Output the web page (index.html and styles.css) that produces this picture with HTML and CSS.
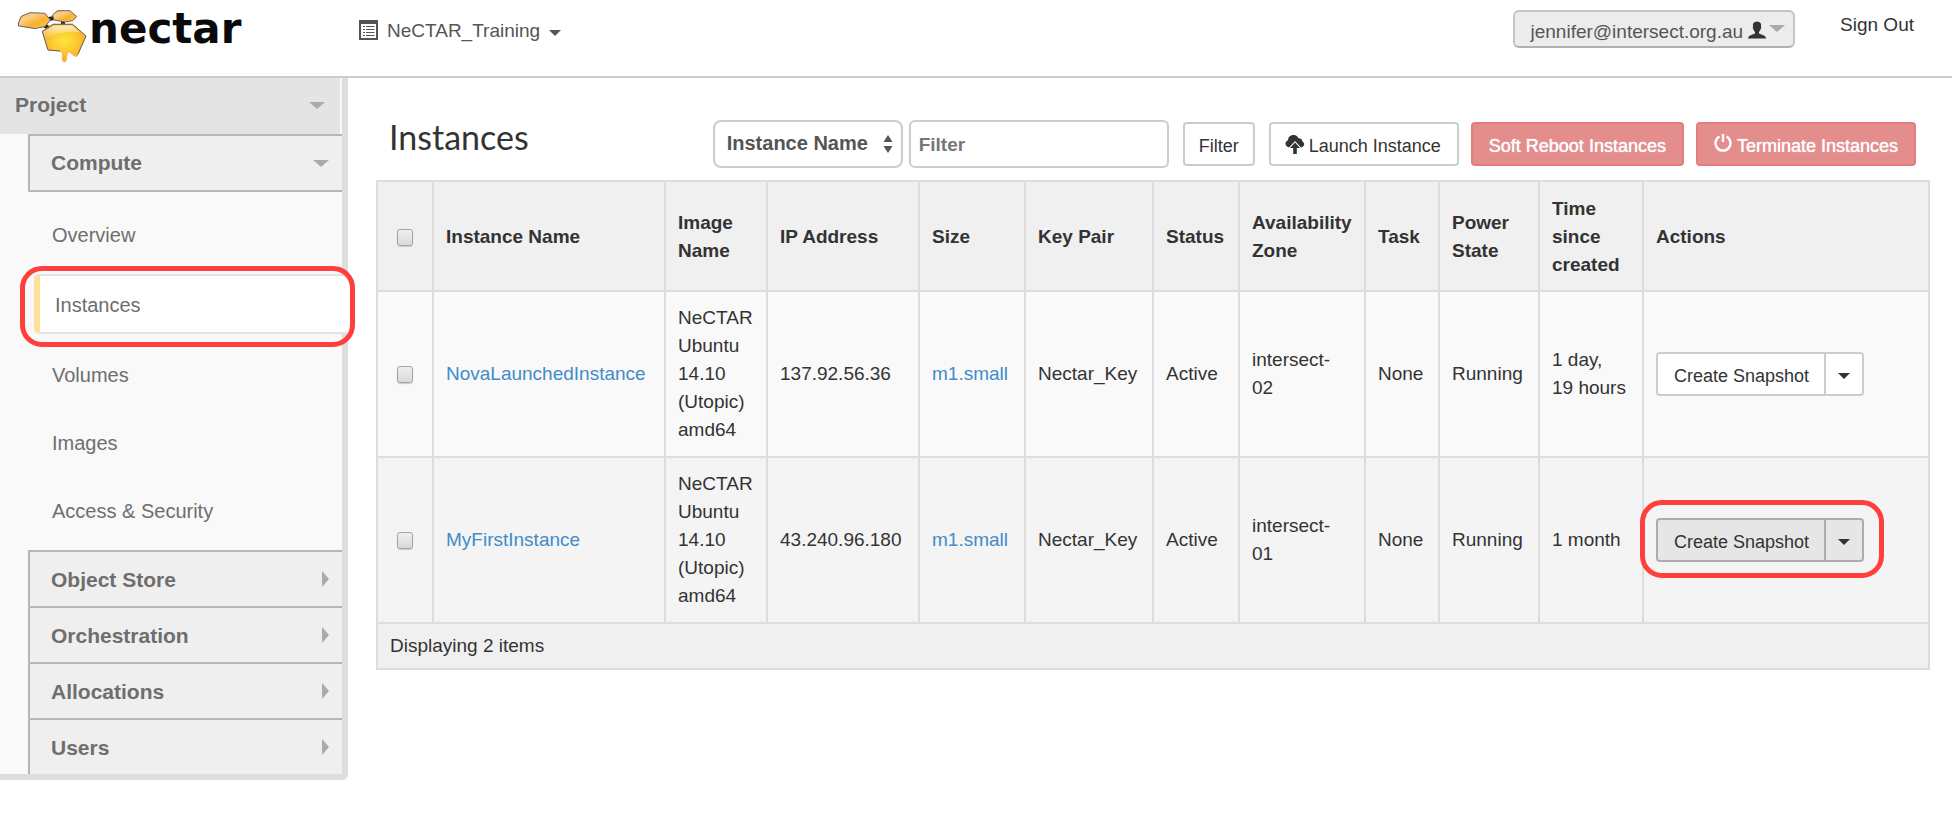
FILE: index.html
```html
<!DOCTYPE html>
<html lang="en">
<head>
<meta charset="utf-8">
<title>Instances - NeCTAR Dashboard</title>
<link rel="stylesheet" href="styles.css">
</head>
<body>
<header class="topbar">
  <a class="brand" href="#">
    <svg class="brand-mark" viewBox="0 0 70 54" aria-hidden="true">
      <defs>
        <linearGradient id="petal" x1="0" y1="0" x2="1" y2="1">
          <stop offset="0" stop-color="#f9a83a"/><stop offset=".3" stop-color="#fcd08a"/><stop offset=".6" stop-color="#f9b02f"/><stop offset="1" stop-color="#fbd43a"/>
        </linearGradient>
        <radialGradient id="body" cx=".5" cy=".45" r=".6">
          <stop offset="0" stop-color="#fbe63a"/><stop offset=".5" stop-color="#fcc92f"/><stop offset="1" stop-color="#f8a02c"/>
        </radialGradient>
        <linearGradient id="shine" x1="0" y1="0" x2="0" y2="1">
          <stop offset="0" stop-color="#fff" stop-opacity=".7"/><stop offset="1" stop-color="#fff" stop-opacity="0"/>
        </linearGradient>
      </defs>
      <path d="M26 15l6 4M31 9l5-1M45 11v5" stroke="#222" stroke-width="4"/>
      <path d="M.5 16V13L3 6.500l9-3.800 15 .6 5.500 6.700-5.500 6.500-10 2z" fill="url(#petal)" stroke="#666"/>
      <path d="M34.500 5l5-4.300H52l6.500 5.800-3.500 4-8 1.500-11-2z" fill="url(#petal)" stroke="#666"/>
      <path d="M24.300 21.500L35 14.300h19.500L68 26l-9 20.500-4-1.500-4-3.500-2 2.500-1 7-2 .7-1.700-1.700.3-6.500L42 41l-12-1z" fill="url(#body)" stroke="#f9ab4c"/>
      <path d="M42 41l-12-1-5.700-18.500L35 14.300h19.500L68 26l-8 18" fill="none" stroke="#666"/>
      <path d="M25.500 22L36 15.500h18l8 7q-18-3-35 6z" fill="url(#shine)"/>
    </svg>
    <span class="brand-name">nectar</span>
  </a>
  <button class="project-switch" type="button">
    <svg class="icon-list" viewBox="0 0 19 20" aria-hidden="true">
      <path d="M1 1h17v18H1z" fill="none" stroke="#555" stroke-width="2"/>
      <path d="M1 2.500h17" stroke="#555" stroke-width="3"/>
      <path d="M4 6.500h2M4 9.500h2M4 12.500h2M4 15.500h2M7 6.500h8.500M7 9.500h8.500M7 12.500h8.500M7 15.500h8.500" stroke="#555"/>
    </svg>
    <span>NeCTAR_Training</span>
    <span class="caret"></span>
  </button>
  <button class="user-menu" type="button">
    <span>jennifer@intersect.org.au</span>
    <svg class="icon-user" viewBox="0 0 18 18" aria-hidden="true">
      <path d="M5.500 2Q6.500.5 9 .5t3.500 1.500q1 1.500.5 4 .6.500-.3 2.200Q12 10 11 11v1.500l5 2q2 .8 2 3H0q0-2.200 2-3l5-2V11Q6 10 5.300 8.200 4.400 6.500 5 6q-.5-2.500.5-4z" fill="#333"/>
    </svg>
    <span class="arrow-down"></span>
  </button>
  <a class="sign-out" href="#">Sign Out</a>
</header>

<div class="layout">
  <nav class="sidebar">
    <button class="nav-project" type="button">Project<span class="arrow-down"></span></button>
    <div class="nav-groups">
      <button class="nav-group nav-group-open" type="button">Compute<span class="arrow-down"></span></button>
      <ul class="nav-items">
        <li><a href="#">Overview</a></li>
        <li class="active"><a href="#">Instances</a><span class="ring"></span></li>
        <li><a href="#">Volumes</a></li>
        <li><a href="#">Images</a></li>
        <li><a href="#">Access &amp; Security</a></li>
      </ul>
      <button class="nav-group" type="button">Object Store<span class="arrow-right"></span></button>
      <button class="nav-group" type="button">Orchestration<span class="arrow-right"></span></button>
      <button class="nav-group" type="button">Allocations<span class="arrow-right"></span></button>
      <button class="nav-group" type="button">Users<span class="arrow-right"></span></button>
    </div>
  </nav>

  <main class="content">
    <div class="heading">
      <h1>Instances</h1>
      <form class="tools">
        <span class="select-box">
          <select aria-label="Filter by"><option>Instance Name</option></select>
          <svg class="icon-updown" viewBox="0 0 10 20" aria-hidden="true"><path d="M5 1l4.500 7h-9zM5 19l4.500-7h-9z" fill="#555"/></svg>
        </span>
        <input class="filter-text" type="text" placeholder="Filter" aria-label="Filter">
        <button class="btn btn-filter" type="button">Filter</button>
        <button class="btn btn-launch" type="button">
          <svg class="icon-cloud" viewBox="0 0 20 20" aria-hidden="true">
            <path d="M2 11.500A3.500 3.500 0 0 1 3 5.300 5.500 5.500 0 0 1 13.500 3.200 3.500 3.500 0 0 1 17.500 6.500a3 3 0 0 1 .5 5L16 12.500l-6-6.500-6 6.500z" fill="#333"/>
            <path d="M10 7.500l5 5.500h-3.200V19H8.200v-6H5z" fill="#333"/>
          </svg>Launch Instance</button>
        <button class="btn btn-danger" type="button">Soft Reboot Instances</button>
        <button class="btn btn-danger" type="button">
          <svg class="icon-power" viewBox="0 0 18 20" aria-hidden="true">
            <path d="M5.500 3.500a7.500 7.500 0 1 0 7 0M9 1v8" fill="none" stroke="#fff" stroke-width="2.400"/>
          </svg>Terminate Instances</button>
      </form>
    </div>

    <table class="instances">
      <colgroup>
        <col class="c-check"><col class="c-name"><col class="c-image"><col class="c-ip"><col class="c-size"><col class="c-key"><col class="c-status"><col class="c-zone"><col class="c-task"><col class="c-power"><col class="c-time"><col>
      </colgroup>
      <thead>
        <tr>
          <th class="check"><input type="checkbox" aria-label="Select all"></th>
          <th>Instance Name</th><th>Image Name</th><th>IP Address</th><th>Size</th><th>Key Pair</th><th>Status</th><th>Availability Zone</th><th>Task</th><th>Power State</th><th>Time since created</th><th>Actions</th>
        </tr>
      </thead>
      <tbody>
        <tr>
          <td class="check"><input type="checkbox" aria-label="Select NovaLaunchedInstance"></td>
          <td><a href="#">NovaLaunchedInstance</a></td>
          <td>NeCTAR Ubuntu 14.10 (Utopic) amd64</td>
          <td>137.92.56.36</td>
          <td><a href="#">m1.small</a></td>
          <td>Nectar_Key</td>
          <td>Active</td>
          <td>intersect-<br>02</td>
          <td>None</td>
          <td>Running</td>
          <td>1 day,<br>19 hours</td>
          <td><div class="btn-group"><button class="btn" type="button">Create Snapshot</button><button class="btn btn-more" type="button" aria-label="More actions"><span class="caret"></span></button></div></td>
        </tr>
        <tr>
          <td class="check"><input type="checkbox" aria-label="Select MyFirstInstance"></td>
          <td><a href="#">MyFirstInstance</a></td>
          <td>NeCTAR Ubuntu 14.10 (Utopic) amd64</td>
          <td>43.240.96.180</td>
          <td><a href="#">m1.small</a></td>
          <td>Nectar_Key</td>
          <td>Active</td>
          <td>intersect-<br>01</td>
          <td>None</td>
          <td>Running</td>
          <td>1 month</td>
          <td><div class="btn-group pressed"><button class="btn" type="button">Create Snapshot</button><button class="btn btn-more" type="button" aria-label="More actions"><span class="caret"></span></button><span class="ring"></span></div></td>
        </tr>
      </tbody>
      <tfoot>
        <tr><td colspan="12">Displaying 2 items</td></tr>
      </tfoot>
    </table>
  </main>
</div>
</body>
</html>
```
FILE: styles.css
```css
* { box-sizing: border-box; }

body {
  margin: 0;
  background: #fff;
  color: #333;
  font-family: "Liberation Sans", Arial, sans-serif;
  font-size: 19px;
  line-height: 28px;
}

button, input, select { margin: 0; font: inherit; color: inherit; }
button { cursor: pointer; }
a { color: #428bca; text-decoration: none; }

.caret {
  border: 6px solid transparent;
  border-top-color: currentColor;
  border-bottom: 0;
}
.arrow-down {
  border: 8px solid transparent;
  border-top: 7px solid #a7abae;
  border-bottom: 0;
}
.arrow-right {
  border: 8px solid transparent;
  border-left: 7px solid #a7abae;
  border-right: 0;
}

/* Red outline drawn over a highlighted control */
.ring {
  position: absolute;
  border: 5px solid #ff3f3b;
  border-radius: 22px;
  pointer-events: none;
}

/* Top bar */
.topbar {
  display: flex;
  align-items: flex-start;
  height: 78px;
  padding: 10px 38px 0 18px;
  border-bottom: 2px solid #ccc;
}
.brand { display: flex; width: 341px; color: #0a0a0a; }
.brand-mark { width: 70px; height: 54px; margin-right: 1px; }
.brand-name {
  font: bold 42px/38px "DejaVu Sans", sans-serif;
}
.project-switch {
  display: flex;
  align-items: center;
  gap: 9px;
  height: 42px;
  padding: 0;
  border: 0;
  background: none;
  color: #555;
}
.project-switch .caret { margin-top: 4px; }
.icon-list { width: 19px; height: 20px; margin-bottom: 2px; }
.user-menu {
  display: flex;
  align-items: center;
  height: 38px;
  margin-left: auto;
  padding: 5px 8px 0 16px;
  border: 2px solid #c4c4c4;
  border-bottom-color: #b0b0b0;
  border-radius: 6px;
  background: #ececec;
  color: #555;
}
.icon-user { width: 18px; height: 18px; margin: 0 3px 4px 5px; }
.user-menu .arrow-down { margin-bottom: 6px; }
.sign-out { margin-left: 45px; color: #333; line-height: 30px; }

/* Sidebar */
.layout { display: flex; align-items: flex-start; }
.sidebar {
  flex: none;
  width: 348px;
  border: solid #ddd;
  border-width: 0 6px 6px 0;
  border-bottom-right-radius: 6px;
  background: #f9f9f9;
}
.nav-project, .nav-group {
  display: flex;
  align-items: center;
  justify-content: space-between;
  width: 100%;
  height: 56px;
  border: 0;
  color: #6e6e6e;
  font-size: 21px;
  font-weight: bold;
}
.nav-project {
  padding: 0 15px 2px 15px;
  border-right: 2px solid #f9f9f9;
  background: #e4e4e4;
}
.nav-groups { padding-left: 28px; }
.nav-group {
  padding: 2px 13px 0 21px;
  border: solid #b7b7b7;
  border-width: 2px 0 0 2px;
  background: #efefef;
}
.nav-group .arrow-right { margin-bottom: 2px; }
.nav-group-open { height: 58px; padding-top: 0; border-bottom-width: 2px; }
.nav-items {
  margin: 0;
  padding: 9px 0 5px 6px;
  list-style: none;
}
.nav-items a {
  display: block;
  padding: 20px 18px;
  color: #6e6e6e;
  font-size: 20px;
}
.nav-items .active {
  position: relative;
  margin: 5px -6px 7px 0;
}
.nav-items .active a {
  padding: 15px 15px 13px;
  border: 2px solid #e3e3e3;
  border-left: 6px solid #fbe198;
  border-right: 0;
  border-radius: 5px 0 0 5px;
  background: #fff;
}
.active .ring { inset: -8px -7px -13px -14px; }

/* Page heading and tools */
.content { flex: 1; min-width: 0; padding: 42px 22px 0 28px; }
.heading {
  display: flex;
  justify-content: space-between;
  margin-bottom: 12px;
  padding: 0 14px 0 13px;
}
h1 {
  margin: 0;
  font: 34px/34px Lato, sans-serif;
}
.tools { display: flex; align-items: center; }
.select-box { position: relative; width: 190px; margin-right: 6px; }
select {
  display: block;
  width: 100%;
  height: 48px;
  padding: 0 12px 2px;
  border: 2px solid #ccc;
  border-radius: 8px;
  background: #fff;
  color: #555;
  font-size: 20px;
  font-weight: bold;
  appearance: none;
}
.icon-updown {
  position: absolute;
  top: 14px;
  right: 10px;
  width: 10px;
  height: 20px;
  pointer-events: none;
}
.filter-text {
  width: 260px;
  height: 48px;
  margin-right: 14px;
  padding: 2px 8px 0;
  border: 2px solid #ccc;
  border-radius: 6px;
  font-weight: bold;
}
.filter-text::placeholder { color: #777; }
.btn {
  display: flex;
  align-items: center;
  height: 44px;
  padding: 3px 16px 0;
  border: 2px solid #ccc;
  border-radius: 4px;
  background: #fff;
  font-size: 18px;
  white-space: nowrap;
}
.btn-filter { margin-right: 14px; padding: 3px 14px 0; }
.btn-danger {
  margin-left: 12px;
  border-color: #e27f7d;
  background: #e38e8d;
  color: #fff;
  text-shadow: 0 0 1px #fff;
}
.icon-cloud { width: 20px; height: 20px; margin: 0 4px 2px -2px; }
.icon-power { width: 18px; height: 20px; margin: 0 5px 6px 0; }

/* Instances table */
.instances {
  width: 100%;
  table-layout: fixed;
  border-collapse: collapse;
}
.c-check { width: 56px; }
.c-name { width: 232px; }
.c-image { width: 102px; }
.c-ip { width: 152px; }
.c-size { width: 106px; }
.c-key { width: 128px; }
.c-status { width: 86px; }
.c-zone { width: 126px; }
.c-task { width: 74px; }
.c-power { width: 100px; }
.c-time { width: 104px; }
th, td {
  padding: 12px;
  border: 2px solid #ddd;
  text-align: left;
  vertical-align: middle;
}
th { padding: 13px 12px 11px; }
th, tfoot td { background: #f0f0f0; }
tbody td { background: #f9f9f9; }
tbody tr:nth-child(2) td { background: #f4f4f4; }
tfoot td { padding: 8px 12px; }
.check { text-align: center; }
.check input {
  display: block;
  width: 16px;
  height: 17px;
  margin: 0 auto;
  border: 1px solid #a4a4a4;
  border-radius: 3px;
  background: linear-gradient(#efefef, #d9d9d9);
  box-shadow: 0 1px 1px #ccc;
  appearance: none;
}
.btn-group { position: relative; display: inline-flex; vertical-align: middle; }
.btn-group .btn { padding: 3px 15px 0 16px; border-radius: 4px 0 0 4px; }
.btn-group .btn-more {
  margin-left: -2px;
  padding: 4px 12px 0;
  border-radius: 0 4px 4px 0;
}
.pressed .btn { border-color: #adadad; background: #e6e6e6; }
.btn-group .ring { inset: -18px -20px -16px -16px; }
```
